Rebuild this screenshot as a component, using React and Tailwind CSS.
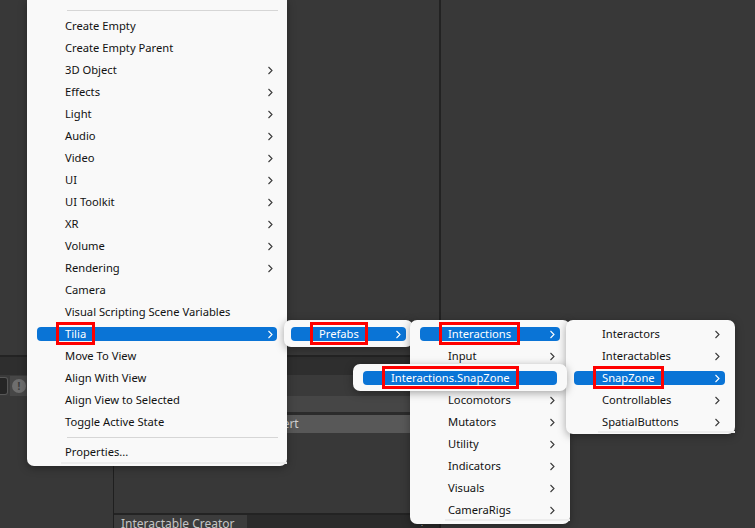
import React from 'react'

const FONT = { fontFamily: '"Noto Sans", "Open Sans", sans-serif' }

const Chevron = ({ white }) => (
  <svg width="6" height="9" viewBox="0 0 6 9" className="shrink-0">
    <path d="M1.5 1 L5 4.5 L1.5 8" fill="none" stroke={white ? '#ffffff' : '#3a3a3a'} strokeWidth="1.1" />
  </svg>
)

const Boxed = ({ children }) => (
  <span className="relative inline-block leading-[14px]">
    {children}
    <span className="absolute -left-[9px] -right-[9px] -top-[5px] -bottom-[4px] border-[3px] border-[#ff0000]" />
  </span>
)

const Item = ({ label, sub, active, boxed, px = 'px-[10px]', pr = 'pr-[5px]' }) => (
  <div className={`h-[22px] flex items-center ${px}`}>
    <div
      className={`h-[14px] w-full flex items-center justify-between rounded-[4px] pl-[28px] ${pr} ${
        active ? 'bg-[#0a74d6] text-white' : 'text-[#111]'
      }`}
    >
      <span className="leading-[14px] whitespace-nowrap">{boxed ? <Boxed>{label}</Boxed> : label}</span>
      {sub && <Chevron white={active} />}
    </div>
  </div>
)

const Sep = ({ className }) => <div className={`h-px bg-[#d6d6d6] ${className}`} />

const mainItems = [
  ['Create Empty'],
  ['Create Empty Parent'],
  ['3D Object', 1],
  ['Effects', 1],
  ['Light', 1],
  ['Audio', 1],
  ['Video', 1],
  ['UI', 1],
  ['UI Toolkit', 1],
  ['XR', 1],
  ['Volume', 1],
  ['Rendering', 1],
  ['Camera'],
  ['Visual Scripting Scene Variables'],
  ['Tilia', 1, 1],
  ['Move To View'],
  ['Align With View'],
  ['Align View to Selected'],
  ['Toggle Active State'],
]

// third row sits under the SnapZone item, so its label is never seen
const prefabItems = ['Interactions', 'Input', '', 'Locomotors', 'Mutators', 'Utility', 'Indicators', 'Visuals', 'CameraRigs']
const interactionItems = ['Interactors', 'Interactables', 'SnapZone', 'Controllables', 'SpatialButtons']

const menuCls = 'absolute bg-[#f9f9f9] shadow-[0_2px_8px_rgba(0,0,0,0.35)] text-[11.2px]'

export default function App() {
  return (
    <div className="relative w-[755px] h-[528px] overflow-hidden bg-[#383838] flex select-none" style={FONT}>
      {/* editor background */}
      <div className="w-[439px] flex flex-col">
        <div className="h-[355px] bg-[#383838]" />
        <div className="h-[2px] bg-[#232323]" />
        <div className="h-[18px] bg-[#2e2e2e]" />
        <div className="h-[21px] bg-[#3a3a3a] flex items-center">
          <div className="w-[8px] h-[18px] rounded-r-[3px] bg-[#252525] border border-l-0 border-[#575757]" />
          <div className="ml-[2px] w-[18px] h-[20px] bg-[#474747] flex items-center justify-center">
            <div className="w-[14px] h-[14px] rounded-full bg-[#6e6e6e] flex items-center justify-center text-[10px] font-bold text-[#3a3a3a] leading-none">!</div>
          </div>
        </div>
        <div className="flex-1 flex">
          <div className="w-[113px] bg-[#383838]" />
          <div className="w-px bg-[#1f1f1f]" />
          <div className="flex-1 flex flex-col">
            <div className="h-[16px] bg-[#464646]" />
            <div className="h-[3px] bg-[#2b2b2b]" />
            <div className="h-[18px] bg-[#3a3a3a] pl-[4px] pr-[4px]">
              <div className="h-full bg-[#585858] rounded-[2px] flex items-center justify-center text-[12px] text-[#d0d0d0]">Convert</div>
            </div>
            <div className="flex-1 bg-[#383838]" />
            <div className="h-[2px] bg-[#232323]" />
            <div className="h-[13px] bg-[#2b2b2b] flex items-start">
              <div className="w-[133px] h-full bg-[#3c3c3c] pl-[7px] pt-[2px] text-[12px] leading-[14px] text-[#c4c4c4] whitespace-nowrap overflow-hidden">Interactable Creator</div>
              <div className="flex-1" />
              <div className="mr-[12px] text-[10px] leading-[12px] text-[#aaa]">⋮</div>
            </div>
          </div>
        </div>
      </div>
      <div className="w-[2px] bg-[#222222]" />
      <div className="flex-1 bg-[#383838]" />

      {/* main context menu */}
      <div className={`${menuCls} left-[27px] top-0 w-[260px] rounded-b-[7px] pt-[10px]`}>
        <Sep className="ml-[40px] mr-[9px] mb-[4px]" />
        {mainItems.map(([l, s, a]) => (
          <Item key={l} label={l} sub={s} active={a} boxed={a} pr="pr-[4px]" />
        ))}
        <Sep className="ml-[40px] mr-[9px] mt-[4px] mb-[4px]" />
        <div className="h-[20px] flex items-center pl-[38px] text-[#111]">Properties...</div>
        <div className="ml-[34px] h-[2px] bg-[#ededed]" />
        <div className="h-[2px]" />
      </div>

      {/* Tilia submenu */}
      <div className={`${menuCls} left-[284px] top-[320px] w-[129px] rounded-[7px] pt-[3px] pb-[2px]`}>
        <Item label="Prefabs" sub active boxed px="px-[7px]" />
      </div>

      {/* Prefabs submenu */}
      <div className={`${menuCls} left-[410px] top-[320px] w-[160px] rounded-[7px] pt-[3px]`}>
        {prefabItems.map((l, i) => (
          <Item key={i} label={l} sub active={i === 0} boxed={i === 0} />
        ))}
        <div className="ml-[35px] h-[2px] bg-[#ededed] -mt-[2px]" />
        <div className="h-[3px]" />
      </div>

      {/* Interactions submenu */}
      <div className={`${menuCls} left-[566px] top-[320px] w-[169px] rounded-[7px] pt-[3px]`}>
        {interactionItems.map((l) => (
          <Item key={l} label={l} sub active={l === 'SnapZone'} boxed={l === 'SnapZone'} px="pl-[8px] pr-[10px]" />
        ))}
        <div className="ml-[32px] h-[2px] bg-[#ededed] -mt-[2px]" />
        <div className="h-[1px]" />
      </div>

      {/* SnapZone prefab item */}
      <div className={`${menuCls} left-[353px] top-[364px] w-[214px] rounded-[7px] pt-[3px] pb-[2px]`}>
        <Item label="Interactions.SnapZone" active boxed />
      </div>
    </div>
  )
}
